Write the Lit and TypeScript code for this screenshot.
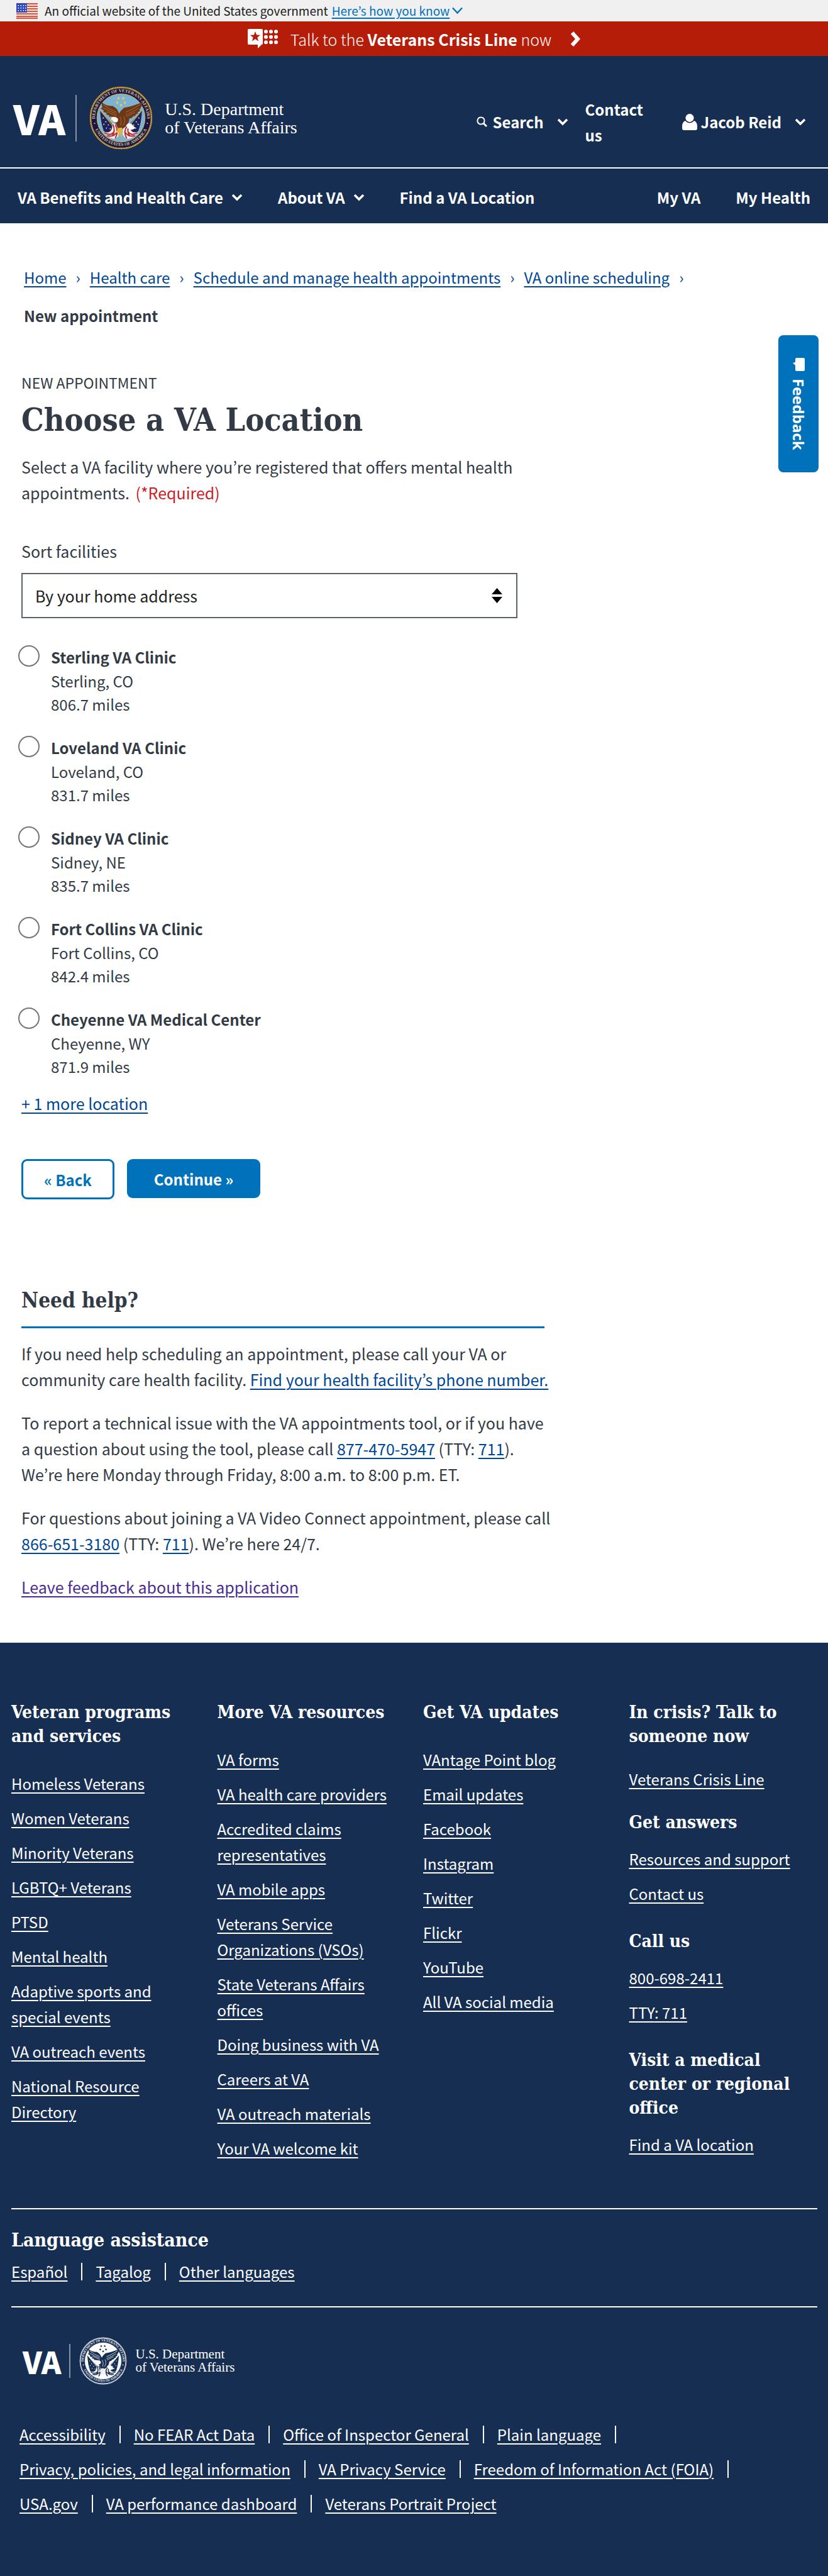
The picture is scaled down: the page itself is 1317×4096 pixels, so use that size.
import { LitElement, html, svg, css } from "lit";
import { customElement } from "lit/decorators.js";

const shared = css`
  * { box-sizing: border-box; }
  a { color: inherit; text-decoration: underline; text-decoration-thickness: 2px; text-underline-offset: 4px; }
  ul, ol { list-style: none; margin: 0; padding: 0; }
  h1, h2, h3, p { margin: 0; }
  button { font: inherit; color: inherit; background: none; border: 0; padding: 0; cursor: pointer; }
  svg { display: block; flex: none; }
`;

const chevron = (cls = "chev") => svg`
  <svg class=${cls} width="18" height="12" viewBox="0 0 18 12" aria-hidden="true">
    <path d="M2 2 9 9 16 2" fill="none" stroke="currentColor" stroke-width="3.6"/>
  </svg>`;

const star = (x: number, y: number, r: number, fill: string) => {
  const pts = Array.from({ length: 10 }, (_, i) => {
    const a = (Math.PI / 5) * i - Math.PI / 2;
    const k = i % 2 ? r * 0.42 : r;
    return `${(x + k * Math.cos(a)).toFixed(2)},${(y + k * Math.sin(a)).toFixed(2)}`;
  }).join(" ");
  return svg`<polygon points=${pts} fill=${fill}/>`;
};

@customElement("va-seal")
class VaSeal extends LitElement {
  static properties = { mono: { type: Boolean } };
  mono = false;
  static styles = css`
    :host { display: block; flex: none; }
    svg { display: block; width: 100%; height: 100%; }
    .ring-text { font: bold 7px "Liberation Serif", serif; }
  `;
  render() {
    const m = this.mono;
    const navy = m ? "#162e51" : "#1b1446";
    const sky = m ? "#ffffff" : "#7fb2cf";
    const gold = m ? "#e8ecf1" : "#e0b53c";
    const ink = m ? "#e8ecf1" : "#d8c88a";
    const brown = m ? "#162e51" : "#6b3717";
    const brownLight = m ? "#dfe4ea" : "#a0622f";
    const blue = m ? "#162e51" : "#1f2257";
    const red = m ? "#162e51" : "#b3252c";
    return html`
      <svg viewBox="0 0 100 100" role="img" aria-label="Seal of the U.S. Department of Veterans Affairs">
        <circle cx="50" cy="50" r="49.6" fill=${navy}/>
        <circle cx="50" cy="50" r="48" fill="none" stroke=${gold} stroke-width="2.4"/>
        <circle cx="50" cy="50" r="48" fill="none" stroke=${navy} stroke-width="1" stroke-dasharray="1 1.6"/>
        <circle cx="50" cy="50" r="38" fill=${sky} stroke=${gold} stroke-width=".8"/>
        <defs>
          <path id="arc-top" d="M9.4 56 A41 41 0 1 1 90.6 56"/>
          <path id="arc-bottom" d="M6.2 60 A45.2 45.2 0 0 0 93.8 60"/>
        </defs>
        <text class="ring-text" fill=${ink} text-anchor="middle"><textPath href="#arc-top" startOffset="50%">DEPARTMENT OF VETERANS AFFAIRS</textPath></text>
        <text class="ring-text" fill=${ink} text-anchor="middle"><textPath href="#arc-bottom" startOffset="50%">UNITED STATES OF AMERICA</textPath></text>
        <circle cx="8.5" cy="58.5" r="1.1" fill=${gold}/><circle cx="91.5" cy="58.5" r="1.1" fill=${gold}/>
        <path d="M17 38 L42 66 L38 80 Q30 78 23 71 Q18 58 17 38Z" fill=${blue}/>
        <path d="M83 38 L58 66 L62 80 Q70 78 77 71 Q82 58 83 38Z" fill=${blue}/>
        ${[[22, 50], [26, 56], [23, 60], [30, 61], [27, 66], [33, 67], [78, 50], [74, 56], [77, 60], [70, 61], [73, 66], [67, 67]].map(([x, y]) => star(x, y, 1.4, "#fff"))}
        <path d="M16.5 37 L46 74 M83.5 37 L54 74" stroke=${gold} stroke-width="1.1" fill="none"/>
        <path d="M36 58 Q46 60 48 74 Q46 82 38 83 Q28 81 22 71 Q30 75 34 70 Q37 66 36 58Z" fill="#f3eeee"/>
        <path d="M64 58 Q54 60 52 74 Q54 82 62 83 Q72 81 78 71 Q70 75 66 70 Q63 66 64 58Z" fill="#f3eeee"/>
        <path d="M37 60 Q42 70 36 79 M41 61 Q47 71 41 82 M24 73 Q33 79 38 73 M28 78 Q38 81 44 72 M63 62 Q58 70 64 79 M59 64 Q53 72 59 82 M76 73 Q67 79 62 73 M72 78 Q62 81 56 72" stroke=${red} stroke-width="1.9" fill="none"/>
        <path d="M19 25 Q28 32 36 31 Q44 34 47 43 Q49 39 55 34 Q68 32 84 25 Q83 33 79 37 L80 39 L76 41 L77 43 L73 44.500 L73 46.500 L69 47.500 L67 50 L63 51 Q63 58 57 64 Q51 69 45 66 L41 57 Q40 53 41 49 L37 50 L36 48 L31 48 L31 45.500 L27 45 L27 42 L22 40.500 L23 38 L18 35.500 L20.500 33.500 Z" fill=${brown}/>
        <path d="M22 29 Q32 37 43 41 M22 34 Q32 40 43 44 M27 40 Q35 43 43 47 M80 29 Q66 38 57 41 M77 35 Q66 42 57 45 M72 41 Q64 45 58 48 M48 48 Q52 54 49 62 M54 47 Q58 54 53 62" stroke=${brownLight} stroke-width="1.1" fill="none"/>
        <path d="M35.500 49 Q41 47 45 51 Q46 55 43 57 L38 56 L34 53.500 Z" fill="#fff"/>
        <path d="M36 52.500 L33 54 L34.500 57 L38 55.500Z" fill=${gold}/>
        <path d="M58 62 Q62 56 67 60 L73 66 Q68 69 63 69 Z" fill="#fff"/>
        <path d="M45 66 L42 74 L46 72 L45 81 L48 76 L51 81 L50 71 L54 74 L51 65Z" fill=${gold}/>
        ${[[46, 19], [53.5, 19], [44, 26], [56, 26], [50, 30]].map(([x, y]) => star(x, y, 2.8, m ? "#162e51" : "#e9cf55"))}
      </svg>`;
  }
}

@customElement("va-logo")
class VaLogo extends LitElement {
  static properties = { mono: { type: Boolean, reflect: true } };
  mono = false;
  static styles = css`
    :host { display: flex; align-items: center; color: #fff; }
    .mark { font: 900 65px/1 "Noto Sans CJK JP", "Open Sans", sans-serif; }
    .rule { width: 2px; height: 74px; background: #8795a8; margin: 0 20px 0 16px; }
    .seal { width: 101px; height: 101px; }
    .dept { margin-left: 19px; font: 28px/29px "Liberation Serif", serif; white-space: nowrap; }
    :host([mono]) .mark { font-size: 48px; }
    :host([mono]) .rule { height: 54px; margin: 0 14px 0 12px; }
    :host([mono]) .seal { width: 76px; height: 76px; }
    :host([mono]) .dept { margin-left: 14px; font-size: 21px; line-height: 21px; }
  `;
  render() {
    return html`
      <span class="mark">VA</span>
      <span class="rule"></span>
      <va-seal class="seal" ?mono=${this.mono}></va-seal>
      <span class="dept">U.S. Department<br>of Veterans Affairs</span>`;
  }
}

@customElement("va-header")
class VaHeader extends LitElement {
  static styles = [shared, css`
    :host { display: block; color: #fff; }
    .gov { height: 34px; background: #f0f0f0; color: #212121; display: flex; align-items: center; padding: 0 26px; font-size: 19px; line-height: 24px; }
    .flag { margin-right: 11px; }
    .gov-link { color: #0071bb; display: flex; align-items: center; gap: 4px; margin-left: 6px; }
    .gov-link span { text-decoration: underline; text-decoration-thickness: 2px; text-underline-offset: 3px; }
    .crisis { height: 55px; background: #b51d09; display: flex; justify-content: center; align-items: center; font-size: 25px; line-height: 34px; }
    .crisis-link { display: flex; align-items: center; text-decoration: none; }
    .crisis-icon { margin-right: 20px; }
    .crisis-arrow { margin-left: 30px; }
    .thin { font-weight: 300; }
    .bar { background: #162e51; font-weight: bold; font-size: 24px; line-height: 41px; }
    .top { display: flex; align-items: center; padding: 48px 35px 28px 21px; border-bottom: 2px solid #fff; }
    .actions { margin-left: auto; padding-top: 12px; display: flex; align-items: center; }
    .action { display: flex; align-items: center; }
    .search { gap: 9px; }
    .action .chev { margin-left: 12px; }
    .contact { width: 112px; margin: 0 42px 0 27px; text-decoration: none; }
    .user { gap: 6px; }
    .user .chev { margin-left: 15px; }
    .nav { display: flex; justify-content: space-between; padding: 25px 28px 21px; }
    .links { display: flex; gap: 56px; }
    .links a { text-decoration: none; }
    .menu { display: flex; align-items: center; gap: 13px; }
  `];
  render() {
    return html`
      <div class="gov">
        <svg class="flag" width="34" height="25" viewBox="0 0 34 25" aria-hidden="true">
          <rect width="34" height="25" fill="#fff"/>
          ${[0, 4, 8, 12, 16, 20, 23].map(y => svg`<rect y=${y} width="34" height="2.200" fill="#e0513c"/>`)}
          <rect width="17" height="15" fill="#2c48b8"/>
          ${[3, 7, 11].map(y => [2.500, 6.500, 10.500, 14].map(x => svg`<rect x=${x} y=${y} width="1.600" height="1.600" fill="#fff"/>`))}
        </svg>
        <span>An official website of the United States government</span>
        <button class="gov-link"><span>Here’s how you know</span>
          <svg width="17" height="12" viewBox="0 0 17 12" aria-hidden="true"><path d="M1 1.500 8.500 9.500 16 1.500" fill="none" stroke="currentColor" stroke-width="2.400"/></svg>
        </button>
      </div>
      <div class="crisis">
        <a class="crisis-link" href="#crisis">
          <svg class="crisis-icon" width="48" height="32" viewBox="0 0 48 32" aria-hidden="true">
            <path d="M2 0H22Q24 0 24 2V23Q24 25 22 25L16 31V25H2Q0 25 0 23V2Q0 0 2 0Z" fill="#fff"/>
            ${star(12, 12.5, 8.5, "#b51d09")}
            ${[4.200, 12.700, 21.200].map(y => [29, 37, 45].map(x => svg`<circle cx=${x} cy=${y} r="3" fill="#fff"/>`))}
          </svg>
          <span><span class="thin">Talk to the</span> <b>Veterans Crisis Line</b> <span class="thin">now</span></span>
          <svg class="crisis-arrow" width="16" height="24" viewBox="0 0 16 24" aria-hidden="true"><path d="M3 2 12 12 3 22" fill="none" stroke="#fff" stroke-width="6"/></svg>
        </a>
      </div>
      <header class="bar">
        <div class="top">
          <va-logo></va-logo>
          <div class="actions">
            <button class="action search">
              <svg width="17" height="17" viewBox="0 0 17 17" aria-hidden="true"><circle cx="7" cy="7" r="5.600" fill="none" stroke="#fff" stroke-width="2"/><path d="M11 11 16 16" stroke="#fff" stroke-width="2.800"/></svg>
              Search ${chevron()}
            </button>
            <a class="contact" href="#contact">Contact us</a>
            <button class="action user">
              <svg width="24" height="26" viewBox="0 0 24 26" aria-hidden="true"><ellipse cx="12" cy="6.500" rx="6.600" ry="6.500" fill="#fff"/><path d="M5 11Q8 14.500 12 14.500T19 11Q24 13 24 20V23Q24 26 21 26H3Q0 26 0 23V20Q0 13 5 11Z" fill="#fff"/></svg>
              Jacob Reid ${chevron()}
            </button>
          </div>
        </div>
        <nav class="nav" aria-label="Main">
          <div class="links">
            <button class="menu">VA Benefits and Health Care ${chevron()}</button>
            <button class="menu">About VA ${chevron()}</button>
            <a href="#find">Find a VA Location</a>
          </div>
          <div class="links"><a href="#my-va">My VA</a><a href="#my-health">My Health</a></div>
        </nav>
      </header>`;
  }
}

const facilities = [
  ["Sterling VA Clinic", "Sterling, CO", "806.7 miles"],
  ["Loveland VA Clinic", "Loveland, CO", "831.7 miles"],
  ["Sidney VA Clinic", "Sidney, NE", "835.7 miles"],
  ["Fort Collins VA Clinic", "Fort Collins, CO", "842.4 miles"],
  ["Cheyenne VA Medical Center", "Cheyenne, WY", "871.9 miles"],
];

@customElement("va-location-form")
class VaLocationForm extends LitElement {
  static styles = [shared, css`
    :host { display: block; color: #323a45; }
    .crumbs { padding: 65px 60px 0 38px; font-size: 24px; }
    .crumbs ol { display: flex; flex-wrap: wrap; row-gap: 20px; }
    .crumbs a { color: #004795; }
    .crumbs i { font-style: normal; color: #004795; margin: 0 15px; }
    .current { font-weight: bold; }
    .content { max-width: 866px; padding: 66px 0 68px 34px; }
    .eyebrow { font-size: 23px; }
    h1, h2 { font-family: "DejaVu Serif Condensed", "DejaVu Serif", serif; font-weight: bold; }
    h1 { font-size: 50px; line-height: 52px; margin: 13px 0 28px; }
    .required { color: #cd2026; margin-left: 4px; }
    .label { display: block; margin: 52px 0 14px; }
    .select-wrap { display: flex; align-items: center; margin-right: 43px; border: 2px solid #5b616b; height: 72px; padding-right: 22px; }
    select { appearance: none; flex: 1; align-self: stretch; border: 0; background: none; font: inherit; color: #212121; padding: 0 20px; margin-right: -17px; }
    .options { margin-top: 43px; display: grid; row-gap: 32px; }
    .option { display: flex; gap: 18px; margin-left: -5px; font-size: 24px; line-height: 37px; }
    .option input { appearance: none; flex: none; width: 34px; height: 34px; margin: 0; border: 2px solid #757575; border-radius: 50%; background: #fff; }
    .option b { display: block; line-height: 38px; }
    .option span span { display: block; }
    .more { display: block; margin-top: 20px; color: #004795; text-decoration: underline; text-decoration-thickness: 2px; text-underline-offset: 4px; }
    .buttons { display: flex; gap: 20px; margin-top: 68px; }
    .btn { height: 62px; padding: 0 43px; border-radius: 9px; font-weight: bold; font-size: 24px; background: #0071bb; color: #fff; }
    .back { height: 64px; padding: 0 33px; background: #fff; color: #0071bb; border: 3px solid #0071bb; }
    h2 { margin: 144px 0 20px; padding-bottom: 24px; border-bottom: 3px solid #0071bb; font-size: 33px; line-height: 34px; }
    .help p { margin: 0 -10px 28px 0; }
    .help p:last-child { margin-bottom: 0; }
    .help a { color: #004795; }
    .help .visited { color: #4c2c92; }
  `];
  render() {
    return html`
      <nav class="crumbs" aria-label="Breadcrumb">
        <ol>
          ${["Home", "Health care", "Schedule and manage health appointments", "VA online scheduling"].map(t => html`<li><a href="#">${t}</a><i>›</i></li>`)}
          <li class="current">New appointment</li>
        </ol>
      </nav>
      <main class="content">
        <div class="eyebrow">NEW APPOINTMENT</div>
        <h1>Choose a VA Location</h1>
        <p>Select a VA facility where you’re registered that offers mental health appointments. <span class="required">(*Required)</span></p>
        <label class="label" for="sort">Sort facilities</label>
        <div class="select-wrap">
          <select id="sort"><option>By your home address</option></select>
          <svg width="17" height="24" viewBox="0 0 17 24" aria-hidden="true"><path d="M8.500 0 17 10H0ZM0 14H17L8.500 24Z" fill="#000"/></svg>
        </div>
        <div class="options" role="radiogroup" aria-label="VA facility">
          ${facilities.map(([name, city, dist]) => html`
            <label class="option"><input type="radio" name="facility" .value=${name}>
              <span><b>${name}</b><span>${city}</span><span>${dist}</span></span>
            </label>`)}
        </div>
        <button class="more">+ 1 more location</button>
        <div class="buttons"><button class="btn back">« Back</button><button class="btn">Continue »</button></div>
        <section class="help">
          <h2>Need help?</h2>
          <p>If you need help scheduling an appointment, please call your VA or community care health facility. <a href="#">Find your health facility’s phone number.</a></p>
          <p>To report a technical issue with the VA appointments tool, or if you have a question about using the tool, please call <a href="tel:8774705947">877-470-5947</a> (TTY: <a href="tel:711">711</a>). We’re here Monday through Friday, 8:00 a.m. to 8:00 p.m. ET.</p>
          <p>For questions about joining a VA Video Connect appointment, please call <a href="tel:8666513180">866-651-3180</a> (TTY: <a href="tel:711">711</a>). We’re here 24/7.</p>
          <p><a class="visited" href="#">Leave feedback about this application</a></p>
        </section>
      </main>`;
  }
}

const footerColumns: [string, string[]][][] = [
  [["Veteran programs and services", ["Homeless Veterans", "Women Veterans", "Minority Veterans", "LGBTQ+ Veterans", "PTSD", "Mental health", "Adaptive sports and special events", "VA outreach events", "National Resource Directory"]]],
  [["More VA resources", ["VA forms", "VA health care providers", "Accredited claims representatives", "VA mobile apps", "Veterans Service Organizations (VSOs)", "State Veterans Affairs offices", "Doing business with VA", "Careers at VA", "VA outreach materials", "Your VA welcome kit"]]],
  [["Get VA updates", ["VAntage Point blog", "Email updates", "Facebook", "Instagram", "Twitter", "Flickr", "YouTube", "All VA social media"]]],
  [
    ["In crisis? Talk to someone now", ["Veterans Crisis Line"]],
    ["Get answers", ["Resources and support", "Contact us"]],
    ["Call us", ["800-698-2411", "TTY: 711"]],
    ["Visit a medical center or regional office", ["Find a VA location"]],
  ],
];

@customElement("va-footer")
class VaFooter extends LitElement {
  static styles = [shared, css`
    :host { display: block; background: #162e51; color: #fff; padding: 92px 17px 96px 18px; font-size: 24px; }
    h2 { font: bold 28px/38px "DejaVu Serif Condensed", "DejaVu Serif", serif; }
    .columns { display: grid; grid-template-columns: repeat(4, 1fr); column-gap: 28px; padding-bottom: 75px; border-bottom: 2px solid #fff; }
    .columns ul { display: grid; row-gap: 14px; padding-top: 35px; }
    .stack ul { padding-top: 18px; }
    .stack div:first-child ul { padding-top: 28px; }
    .stack div + div { padding-top: 37px; }
    .stack div:nth-child(2) { padding-top: 30px; }
    .language { padding: 30px 0 35px; border-bottom: 2px solid #fff; }
    .language h2 { margin-bottom: 10px; font-size: 30px; }
    .row { display: flex; flex-wrap: wrap; row-gap: 14px; }
    .row li { display: flex; align-items: center; padding-right: 21px; }
    .row li:last-child { padding-right: 0; }
    .row li:not(:last-child)::after { content: ""; width: 2px; height: 28px; background: #fff; margin-left: 22px; }
    .logo { margin: 47px 0 58px 18px; }
    .legal { margin-left: 13px; }
  `];
  private row(items: string[], cls = "") {
    return html`<ul class="row ${cls}">${items.map(t => html`<li><a href="#">${t}</a></li>`)}</ul>`;
  }
  render() {
    return html`
      <div class="columns">
        ${footerColumns.map(col => html`<div class=${col.length > 1 ? "stack" : "single"}>
          ${col.map(([title, items]) => html`<div><h2>${title}</h2><ul>${items.map(t => html`<li><a href="#">${t}</a></li>`)}</ul></div>`)}
        </div>`)}
      </div>
      <div class="language"><h2>Language assistance</h2>${this.row(["Español", "Tagalog", "Other languages"])}</div>
      <va-logo class="logo" mono></va-logo>
      ${this.row(["Accessibility", "No FEAR Act Data", "Office of Inspector General", "Plain language", "Privacy, policies, and legal information", "VA Privacy Service", "Freedom of Information Act (FOIA)", "USA.gov", "VA performance dashboard", "Veterans Portrait Project"], "legal")}`;
  }
}

@customElement("app-root")
class AppRoot extends LitElement {
  static styles = [shared, css`
    :host { display: block; position: relative; background: #fff; font-family: "Noto Sans CJK JP", "Open Sans", sans-serif; font-size: 25px; line-height: 41px; }
    .feedback { position: absolute; top: 533px; right: 15px; width: 64px; height: 218px; border-radius: 8px; background: #0071bb; color: #fff; writing-mode: vertical-rl; display: flex; align-items: center; justify-content: center; gap: 12px; font: bold 24px/32px "Open Sans", sans-serif; }
  `];
  render() {
    return html`
      <va-header></va-header>
      <va-location-form></va-location-form>
      <va-footer></va-footer>
      <button class="feedback">
        <svg width="19" height="21" viewBox="0 0 19 21" aria-hidden="true"><path d="M6 0H17Q19 0 19 2V19Q19 21 17 21H6Q4 21 4 19V12L0 8L4 7V2Q4 0 6 0Z" fill="#fff"/></svg>
        <span>Feedback</span>
      </button>`;
  }
}
